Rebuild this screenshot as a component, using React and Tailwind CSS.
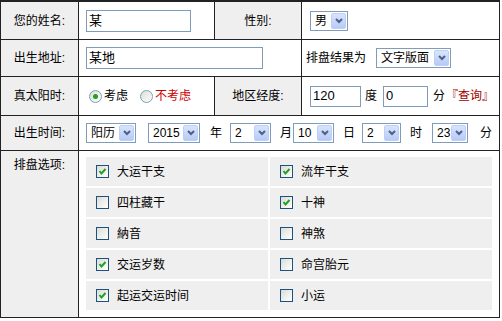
const font = "font-['Liberation_Sans','Noto_Sans_CJK_SC',sans-serif]"

function Label({ children, className = '' }) {
  return (
    <div className={`bg-[#efefef] border-r border-[#222] flex items-center justify-center text-[12px] ${className}`}>
      {children}
    </div>
  )
}

function Select({ value, w }) {
  return (
    <div className={`flex items-center h-[20px] border border-[#7f9db9] bg-white ${w}`}>
      <span className="flex-1 pl-[4px] text-[12px] leading-none">{value}</span>
      <span className="w-[15px] h-[16px] mr-[1px] rounded-[2px] bg-gradient-to-b from-[#d9e4fd] to-[#b7cbf7] border border-[#bccffa] flex items-center justify-center">
        <svg width="8" height="6" viewBox="0 0 8 6">
          <path d="M1 1 L4 4 L7 1" stroke="#4d6185" strokeWidth="2" fill="none" />
        </svg>
      </span>
    </div>
  )
}

function Check({ checked }) {
  return (
    <span className="w-[13px] h-[13px] border border-[#1c5180] bg-gradient-to-br from-[#dcdcd6] to-white flex items-center justify-center shrink-0">
      {checked && (
        <svg width="9" height="9" viewBox="0 0 9 9">
          <path d="M1.5 4 L3.5 6.5 L7.5 2" stroke="#21a121" strokeWidth="2" fill="none" />
        </svg>
      )}
    </span>
  )
}

function Radio({ checked }) {
  return (
    <span className="w-[13px] h-[13px] rounded-full border border-[#7f9db9] bg-gradient-to-br from-[#dcdcd6] to-white flex items-center justify-center shrink-0">
      {checked && <span className="w-[5px] h-[5px] rounded-full bg-[#21a121]" />}
    </span>
  )
}

const options = [
  ['大运干支', true, '流年干支', true],
  ['四柱藏干', false, '十神', true],
  ['納音', false, '神煞', false],
  ['交运岁数', true, '命宫胎元', false],
  ['起运交运时间', true, '小运', false],
]

export default function App() {
  return (
    <div className={`w-[500px] bg-white text-black ${font}`}>
      <div className="border-t-2 border-x border-b border-[#222]">
        {/* 姓名 / 性别 */}
        <div className="flex h-[38px] border-b border-[#222]">
          <Label className="w-[78px]">您的姓名:</Label>
          <div className="w-[136px] border-r border-[#222] flex items-center pl-[7px]">
            <div className="w-[105px] h-[22px] border border-[#7f9db9] flex items-center pl-[2px] text-[13px]">某</div>
          </div>
          <Label className="w-[87px]">性别:</Label>
          <div className="flex-1 flex items-center pl-[8px]">
            <Select value="男" w="w-[38px]" />
          </div>
        </div>

        {/* 出生地址 */}
        <div className="flex h-[37px] border-b border-[#222]">
          <Label className="w-[78px]">出生地址:</Label>
          <div className="w-[223px] border-r border-[#222] flex items-center pl-[7px]">
            <div className="w-[177px] h-[22px] border border-[#7f9db9] flex items-center pl-[2px] text-[13px]">某地</div>
          </div>
          <div className="flex-1 flex items-center pl-[4px] text-[12px]">
            <span>排盘结果为</span>
            <div className="ml-[10px]">
              <Select value="文字版面" w="w-[75px]" />
            </div>
          </div>
        </div>

        {/* 真太阳时 */}
        <div className="flex h-[39px] border-b border-[#222]">
          <Label className="w-[78px]">真太阳时:</Label>
          <div className="w-[136px] border-r border-[#222] flex items-center pl-[10px] text-[12px]">
            <Radio checked />
            <span className="ml-[2px]">考虑</span>
            <span className="ml-[12px]"><Radio /></span>
            <span className="ml-[2px] text-[#cc0000]">不考虑</span>
          </div>
          <Label className="w-[87px]">地区经度:</Label>
          <div className="flex-1 flex items-center pl-[8px] text-[12px]">
            <div className="w-[51px] h-[21px] border border-[#7f9db9] flex items-center pl-[2px] text-[13px]">120</div>
            <span className="ml-[4px]">度</span>
            <div className="ml-[6px] w-[45px] h-[21px] border border-[#7f9db9] flex items-center pl-[2px] text-[13px]">0</div>
            <span className="ml-[5px]">分</span>
            <span className="ml-[1px] text-[#a00000]">『查询』</span>
          </div>
        </div>

        {/* 出生时间 */}
        <div className="flex h-[35px] border-b border-[#222]">
          <Label className="w-[78px]">出生时间:</Label>
          <div className="flex-1 flex items-center pl-[7px] text-[12px]">
            <Select value="阳历" w="w-[50px]" />
            <div className="ml-[12px]"><Select value="2015" w="w-[52px]" /></div>
            <span className="ml-[10px]">年</span>
            <div className="ml-[8px]"><Select value="2" w="w-[41px]" /></div>
            <span className="ml-[9px]">月</span>
            <div className="ml-[1px]"><Select value="10" w="w-[41px]" /></div>
            <span className="ml-[9px]">日</span>
            <div className="ml-[7px]"><Select value="2" w="w-[39px]" /></div>
            <span className="ml-[9px]">时</span>
            <div className="ml-[10px]"><Select value="23" w="w-[36px]" /></div>
            <span className="ml-[12px]">分</span>
          </div>
        </div>

        {/* 排盘选项 */}
        <div className="flex h-[166px]">
          <div className="w-[78px] bg-[#efefef] border-r border-[#222] text-center text-[12px] pt-[5px]">排盘选项:</div>
          <div className="flex-1 pl-[7px] pt-[6px]">
            <div className="grid grid-cols-[182px_222px] gap-x-[2px] gap-y-[2px]">
              {options.map(([a, ac, b, bc]) => [
                <div key={a} className="h-[29px] bg-[#efefef] flex items-center pl-[10px] text-[12px]">
                  <Check checked={ac} />
                  <span className="ml-[8px]">{a}</span>
                </div>,
                <div key={b} className="h-[29px] bg-[#efefef] flex items-center pl-[10px] text-[12px]">
                  <Check checked={bc} />
                  <span className="ml-[8px]">{b}</span>
                </div>,
              ])}
            </div>
          </div>
        </div>
      </div>
    </div>
  )
}
